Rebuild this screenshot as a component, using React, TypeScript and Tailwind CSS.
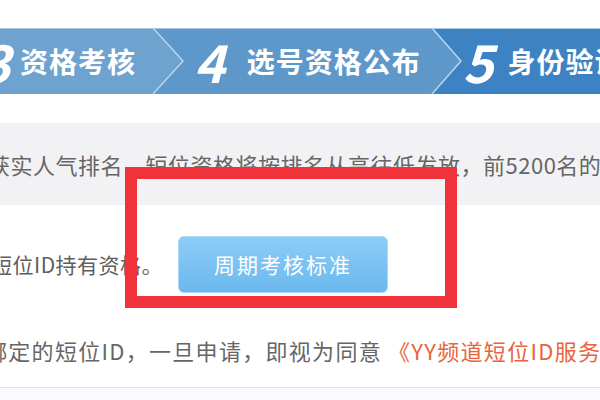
import React from "react";

const font = { fontFamily: '"Noto Sans CJK SC", "Noto Sans", sans-serif' };

function StepBar() {
  return (
    <div className="relative h-[66px] w-full overflow-hidden">
      {/* chevron background */}
      <svg className="absolute inset-0" width="600" height="66" viewBox="0 0 600 66">
        <polygon points="0,0 153,0 183,33 153,66 0,66" fill="#6ea3d0" />
        <polygon points="153,0 432,0 461,33 432,66 153,66 183,33" fill="#5e98cb" />
        <polygon points="432,0 600,0 600,66 432,66 461,33" fill="#3d83c3" />
        <line x1="0" y1="0.5" x2="600" y2="0.5" stroke="#a9c8e4" strokeWidth="1" />
        <polyline points="153,0 183,33 153,66" fill="none" stroke="#b9d4ec" strokeWidth="1.5" />
        <polyline points="432,0 461,33 432,66" fill="none" stroke="#b9d4ec" strokeWidth="1.5" />
      </svg>
      <div className="relative flex h-full items-center text-white font-bold whitespace-nowrap" style={font}>
        <span className="ml-[-20px] w-[32px] shrink-0 text-[52px] italic leading-none">3</span>
        <span className="ml-[8px] shrink-0 text-[28px] tracking-[1px] leading-none">资格考核</span>
        <span className="ml-[58px] shrink-0 text-[52px] italic leading-none">4</span>
        <span className="ml-[22px] shrink-0 text-[28px] tracking-[1px] leading-none">选号资格公布</span>
        <span className="ml-[42px] shrink-0 text-[52px] italic leading-none">5</span>
        <span className="ml-[14px] shrink-0 text-[28px] tracking-[1px] leading-none">身份验证</span>
      </div>
    </div>
  );
}

export default function App() {
  return (
    <div className="relative w-[600px] h-[400px] overflow-hidden bg-white flex flex-col" style={font}>
      <div className="h-[28px] shrink-0" />
      <StepBar />
      <div className="h-[29px] shrink-0" />

      {/* gray notice band */}
      <div className="h-[82px] shrink-0 bg-[#f2f2f4] flex items-center overflow-hidden">
        <p className="ml-[-12px] whitespace-nowrap text-[22px] leading-none text-[#666] tracking-[0.5px]">
          获实人气排名，短位资格将按排名从高往低发放，前5200名的短位ID
        </p>
      </div>

      {/* holder row with button */}
      <div className="mt-[31px] h-[57px] shrink-0 flex items-center">
        <p className="ml-[-9px] w-[187px] shrink-0 whitespace-nowrap text-[21px] leading-none text-[#5e5e5e] tracking-[0.5px]">
          短位ID持有资格。
        </p>
        <button className="h-[57px] w-[210px] shrink-0 rounded-[6px] border border-[#a8d8f8] bg-gradient-to-b from-[#8dcdf6] to-[#6ab8ee] text-white text-[21px] tracking-[2px] leading-none">
          周期考核标准
        </button>
      </div>

      {/* agreement row */}
      <div className="mt-[42px] h-[30px] shrink-0 flex items-center overflow-hidden">
        <p className="ml-[-15px] whitespace-nowrap text-[22px] leading-none text-[#666] tracking-[1.3px]">
          绑定的短位ID，一旦申请，即视为同意
          <span className="ml-[6px] text-[#e8643c]">《YY频道短位ID服务协议》</span>
        </p>
      </div>

      <div className="mt-[22px] flex-1 border-t border-[#dbe8f4] bg-[#f8fafd]" />

      {/* red highlight box */}
      <div className="absolute left-[125px] top-[167px] w-[332px] h-[141px] border-[12px] border-[#f0323a]" />
    </div>
  );
}
